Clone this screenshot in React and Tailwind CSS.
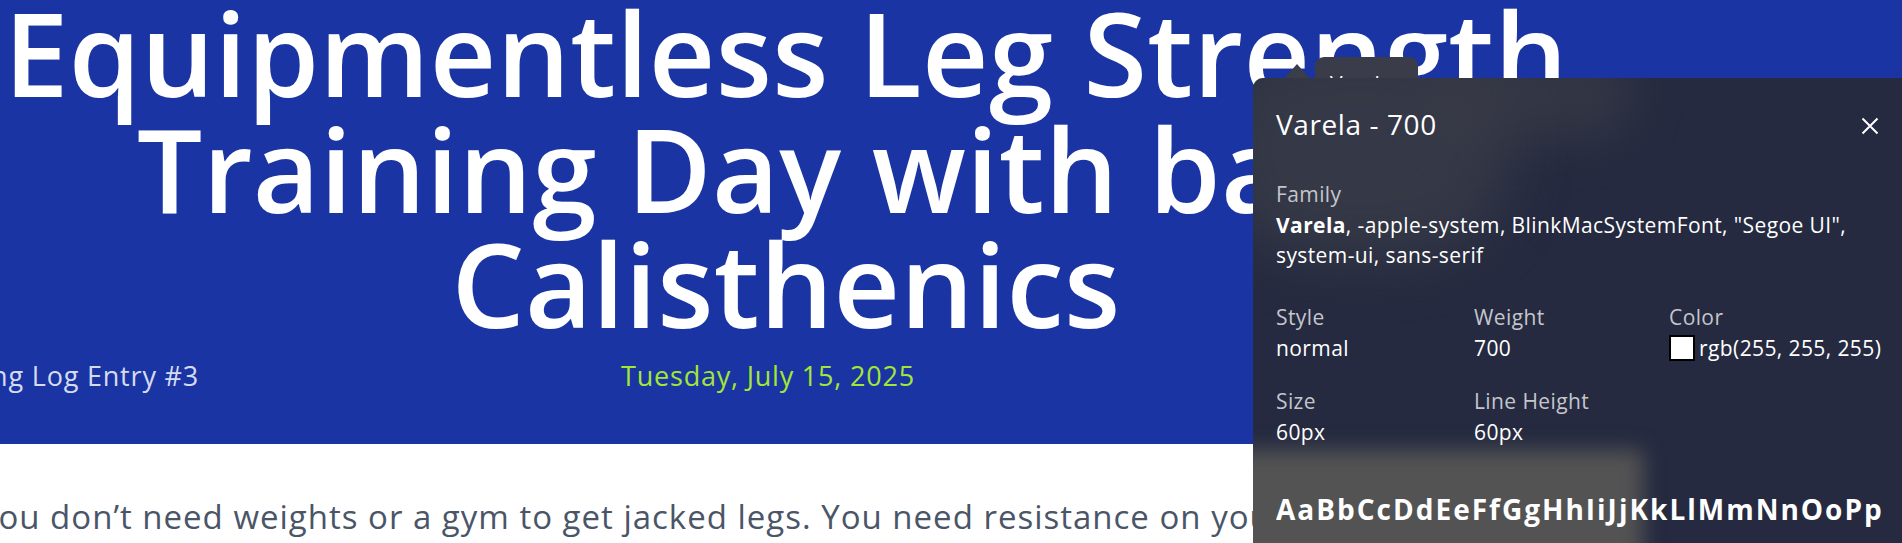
export default function App() {
  return (
    <div className="relative w-[1902px] h-[543px] overflow-hidden bg-white font-['Open_Sans',sans-serif]">
      <header className="h-[444px] bg-[#1a35a3] flex flex-col">
        <h1 className="-mt-[5px] w-[1572px] text-center text-white font-semibold text-[115.5px] leading-[115.5px] tracking-[0.3px]">
          <span className="block whitespace-nowrap">Equipmentless Leg Strength</span>
          <span className="block whitespace-nowrap">Training Day with basic</span>
          <span className="block whitespace-nowrap">Calisthenics</span>
        </h1>
        <div className="mt-[14px] flex items-baseline text-[27px] leading-[40px] tracking-[0.8px]">
          <div className="w-[199px] flex justify-end whitespace-nowrap text-[#d6dcf0]">
            <span className="shrink-0">Training Log Entry #3</span>
          </div>
          <span className="ml-[422px] whitespace-nowrap text-[#a3e635]">Tuesday, July 15, 2025</span>
        </div>
      </header>
      <p className="-ml-[21px] pt-[48px] whitespace-nowrap text-[33px] leading-[50px] tracking-[1px] text-[#4a5568]">
        You don’t need weights or a gym to get jacked legs. You need resistance on your muscles and consistency.
      </p>

      {/* tooltip arrow + tab behind the panel */}
      <div className="absolute left-[1283px] top-[64px] w-0 h-0 border-l-[14px] border-r-[14px] border-b-[16px] border-l-transparent border-r-transparent border-b-[#3b3e48]" />
      <div className="absolute left-[1315px] top-[57px] w-[103px] h-[40px] rounded-t-[9px] bg-[#3a3d49] pl-[15px] pt-[12px] text-[21px] leading-[30px] text-white">
        Varela
      </div>

      {/* font inspector panel */}
      <div className="absolute left-[1253px] top-[78px] w-[700px] h-[520px] rounded-tl-[10px] overflow-hidden bg-[#252a40] text-white tracking-[0.4px]">
        <div className="absolute -left-[40px] -top-[40px] w-[300px] h-[220px] rounded-full bg-[#3a3d48] blur-[30px] opacity-80" />
        <div className="absolute left-[180px] -top-[30px] w-[200px] h-[90px] rounded-full bg-[#3a3c46] blur-[25px] opacity-70" />
        <div className="absolute -left-[30px] top-[372px] w-[420px] h-[200px] bg-[#535353] blur-[10px]" />
        <div className="relative pl-[23px] pt-[28px]">
          <div className="w-[603px] flex items-center justify-between">
            <span className="text-[28px] leading-[36px] tracking-[0.6px]">Varela - 700</span>
            <svg width="18" height="18" viewBox="0 0 18 18" className="mt-[4px]">
              <path d="M1.5 1.5 L16.5 16.5 M16.5 1.5 L1.5 16.5" stroke="white" strokeWidth="2" />
            </svg>
          </div>
          <div className="mt-[37px] text-[21px]">
            <div className="leading-[31px] text-[#c4c6cc]">Family</div>
            <div className="leading-[30px] w-[600px]">
              <span className="font-bold">Varela</span>, -apple-system, BlinkMacSystemFont, "Segoe UI", system-ui, sans-serif
            </div>
          </div>
          <div className="mt-[32px] grid grid-cols-[198px_195px_auto] gap-y-[23px] text-[21px]">
            <div>
              <div className="leading-[31px] text-[#c4c6cc]">Style</div>
              <div className="leading-[30px]">normal</div>
            </div>
            <div>
              <div className="leading-[31px] text-[#c4c6cc]">Weight</div>
              <div className="leading-[30px]">700</div>
            </div>
            <div>
              <div className="leading-[31px] text-[#c4c6cc]">Color</div>
              <div className="flex items-center gap-[4px] leading-[30px]">
                <span className="inline-block w-[26px] h-[26px] border-2 border-black bg-white" />
                <span>rgb(255, 255, 255)</span>
              </div>
            </div>
            <div>
              <div className="leading-[31px] text-[#c4c6cc]">Size</div>
              <div className="leading-[30px]">60px</div>
            </div>
            <div>
              <div className="leading-[31px] text-[#c4c6cc]">Line Height</div>
              <div className="leading-[30px]">60px</div>
            </div>
            <div />
          </div>
          <div className="mt-[44px] w-[608px] overflow-hidden whitespace-nowrap text-[28px] leading-[36px] font-bold tracking-[2px]">
            AaBbCcDdEeFfGgHhIiJjKkLlMmNnOoPpQqRrSsTtUuVvWwXxYyZz
          </div>
        </div>
      </div>
    </div>
  );
}
